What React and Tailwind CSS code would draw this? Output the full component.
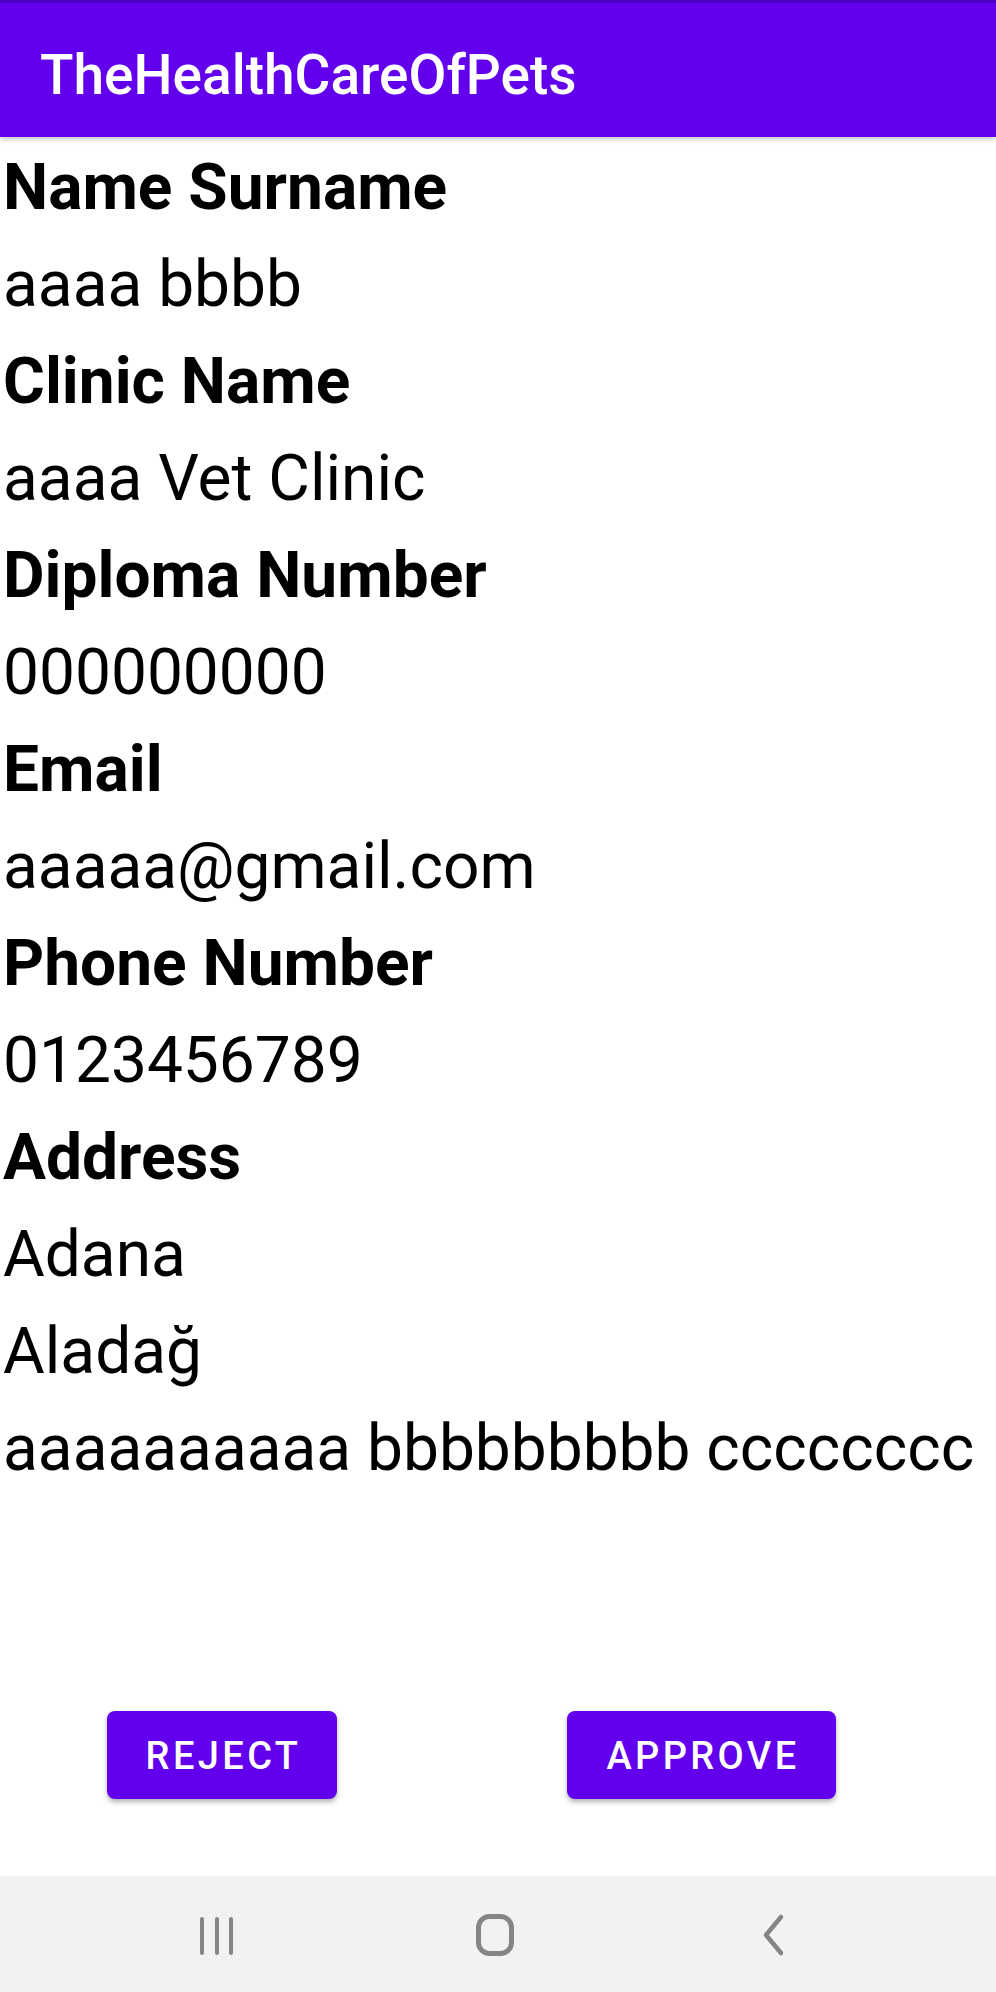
import React from "react";

const rows = [
  { label: "Name Surname", value: "aaaa bbbb" },
  { label: "Clinic Name", value: "aaaa Vet Clinic" },
  { label: "Diploma Number", value: "000000000" },
  { label: "Email", value: "aaaaa@gmail.com" },
  { label: "Phone Number", value: "0123456789" },
];

const address = ["Adana", "Aladağ", "aaaaaaaaaa bbbbbbbbb cccccccc"];

const NavBar = () => (
  <div className="h-[116px] bg-[#f2f2f2] flex items-center">
    <div className="w-[996px] relative h-full">
      <svg className="absolute left-[195px] top-[40px]" width="44" height="40" viewBox="0 0 44 40">
        <g stroke="#858585" strokeWidth="4" strokeLinecap="round">
          <line x1="7" y1="3" x2="7" y2="37" />
          <line x1="22" y1="3" x2="22" y2="37" />
          <line x1="36" y1="3" x2="36" y2="37" />
        </g>
      </svg>
      <svg className="absolute left-[472px] top-[36px]" width="46" height="46" viewBox="0 0 46 46">
        <rect x="6.5" y="4.5" width="33" height="37" rx="11" fill="none" stroke="#858585" strokeWidth="5" />
      </svg>
      <svg className="absolute left-[758px] top-[37px]" width="32" height="44" viewBox="0 0 32 44">
        <polyline points="23,4 8,22 23,40" fill="none" stroke="#858585" strokeWidth="4.5" strokeLinecap="round" strokeLinejoin="round" />
      </svg>
    </div>
  </div>
);

export default function App() {
  return (
    <div
      className="w-[996px] h-[1992px] bg-white flex flex-col overflow-hidden"
      style={{ fontFamily: "Roboto, 'Liberation Sans', sans-serif" }}
    >
      <header className="h-[137px] bg-[#6200ee] border-t-[3px] border-[#4a00c0] shadow-[0_2px_6px_rgba(0,0,0,0.25)] flex items-center pl-[40px] relative z-10">
        <h1 className="text-white text-[55px] font-medium leading-none mt-[11px]">TheHealthCareOfPets</h1>
      </header>

      <main className="pt-[2px] pl-[3px] text-black text-[64px] leading-[97px]">
        {rows.map((r) => (
          <div key={r.label}>
            <div className="font-bold">{r.label}</div>
            <div>{r.value}</div>
          </div>
        ))}
        <div className="font-bold">Address</div>
        {address.map((a) => (
          <div key={a} className="whitespace-nowrap">{a}</div>
        ))}
      </main>

      <div className="flex-1 flex items-end pb-[77px]">
        <div className="flex pl-[107px] gap-[230px]">
          <button className="w-[230px] h-[88px] pl-[3px] pt-[3px] bg-[#6200ee] rounded-[8px] text-white text-[38px] font-medium tracking-[3.4px] shadow-[0_3px_5px_rgba(0,0,0,0.3)]">
            REJECT
          </button>
          <button className="w-[269px] h-[88px] pl-[3px] pt-[3px] bg-[#6200ee] rounded-[8px] text-white text-[38px] font-medium tracking-[3.4px] shadow-[0_3px_5px_rgba(0,0,0,0.3)]">
            APPROVE
          </button>
        </div>
      </div>

      <NavBar />
    </div>
  );
}
